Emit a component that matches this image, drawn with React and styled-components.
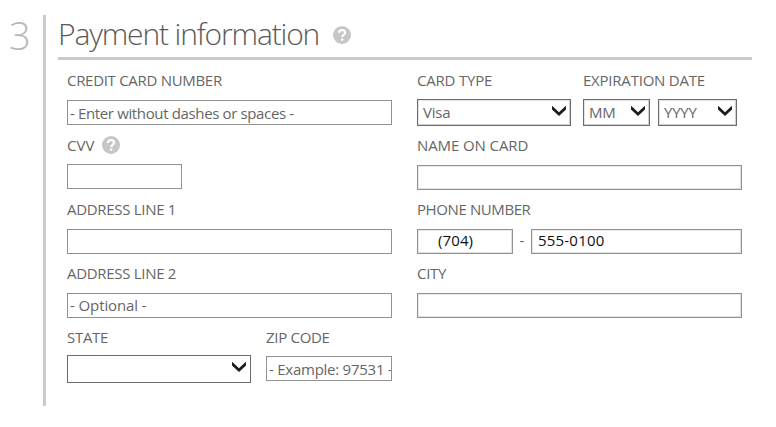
import React from "react";
import styled, { createGlobalStyle } from "styled-components";

const GlobalStyle = createGlobalStyle`
  * { box-sizing: border-box; }
  body {
    margin: 0;
    background: #fff;
    font-family: "Open Sans", "Noto Sans", sans-serif;
    color: #666;
  }
`;

const Page = styled.main`
  display: flex;
  width: 776px;
  height: 427px;
  padding: 15px 24px 21px 9px;
  overflow: hidden;
`;

const StepNumber = styled.div`
  width: 34px;
  font-size: 38px;
  font-weight: 300;
  line-height: 41px;
  color: #b8b8b8;
`;

const Section = styled.section`
  flex: 1;
  height: 391px;
  padding-left: 12px;
  border-left: 3px solid #cbcbcb;
`;

const Header = styled.header`
  display: flex;
  align-items: center;
  gap: 14px;
  height: 45px;
  padding-bottom: 5px;
  border-bottom: 3px solid #cbcbcb;
`;

const Title = styled.h1`
  margin: 0;
  font-size: 30px;
  font-weight: 300;
  line-height: 40px;
  white-space: nowrap;
  letter-spacing: -1.15px;
  color: #5a5a5a;
`;

const Columns = styled.div`
  display: grid;
  grid-template-columns: 325px 325px;
  column-gap: 25px;
  padding: 10px 0 0 9px;
`;

const Column = styled.div`
  display: grid;
  grid-template-rows: 65px 64px 64px 64px 64px;
`;

const FieldRow = styled.div`
  display: flex;
  gap: ${(p) => p.$gap || 0}px;
`;

const Field = styled.div`
  width: ${(p) => (p.$width ? `${p.$width}px` : "100%")};
`;

const LabelLine = styled.div`
  display: flex;
  align-items: center;
  gap: 8px;
  height: 20px;
  margin-bottom: ${(p) => p.$drop}px;
`;

const Label = styled.label`
  font-size: 15px;
  line-height: 20px;
  white-space: nowrap;
  letter-spacing: ${(p) => p.$spacing ?? -0.3}px;
`;

const Input = styled.div`
  width: ${(p) => (p.$width ? `${p.$width}px` : "100%")};
  height: 25px;
  padding-left: ${(p) => p.$inset ?? 2}px;
  border: 1px solid #929292;
  box-shadow: ${(p) => (p.$soft ? "inset -1px -1px #e0e0e0, inset 1px 1px #e8e8e8" : "none")};
  font-size: 15px;
  line-height: ${(p) => p.$line || 25}px;
  letter-spacing: ${(p) => p.$spacing ?? -0.35}px;
  color: ${(p) => (p.$filled ? "#111" : "#666")};
  white-space: nowrap;
  overflow: hidden;
`;

const Select = styled.div`
  display: flex;
  justify-content: space-between;
  width: ${(p) => p.$width}px;
  height: ${(p) => p.$height || 27}px;
  padding: 0 4px 0 5px;
  border: 1px solid #6c6c6c;
  box-shadow: ${(p) => (p.$soft ? "inset -1px -1px #d0d0d0, inset 1px 1px #e4e4e4" : "none")};
  font-size: 15px;
  line-height: 24px;
  letter-spacing: ${(p) => p.$spacing ?? -0.2}px;
`;

const Arrow = styled.svg`
  width: 14px;
  height: 11px;
  margin-top: 6px;
`;

const Dash = styled.span`
  width: 18px;
  text-align: center;
  font-size: 15px;
  line-height: 23px;
`;

const HelpIcon = styled.svg`
  display: block;
  width: 18px;
  height: 18px;
  margin-top: ${(p) => p.$drop || 0}px;
`;

function Help({ drop }) {
  return (
    <HelpIcon viewBox="0 0 18 18" $drop={drop} aria-label="Help">
      <circle cx="9" cy="9" r="9" fill="#c6c6c6" />
      <path d="M5.900 6.900C6 4.900 7.300 4 9 4c1.900 0 3.100 1 3.100 2.600 0 2.200-2.900 2.200-2.900 4.400" fill="none" stroke="#fff" strokeWidth="2.200" />
      <circle cx="9.200" cy="13.600" r="1.350" fill="#fff" />
    </HelpIcon>
  );
}

function Chevron() {
  return (
    <Arrow viewBox="0 0 14 11" aria-hidden="true">
      <path d="M.4 0 7 6.200 13.600 0 14 .4V3.600L7 10 0 3.600V.4Z" fill="#1c1c1c" />
    </Arrow>
  );
}

function Group({ label, spacing, drop = 10, width, help, children }) {
  return (
    <Field $width={width}>
      <LabelLine $drop={drop}>
        <Label $spacing={spacing}>{label}</Label>
        {help && <Help />}
      </LabelLine>
      {children}
    </Field>
  );
}

export default function App() {
  return (
    <>
      <GlobalStyle />
      <Page>
        <StepNumber>3</StepNumber>
        <Section>
          <Header>
            <Title>Payment information</Title>
            <Help drop={3} />
          </Header>
          <Columns>
            <Column>
              <Group label="CREDIT CARD NUMBER">
                <Input $spacing={-0.36}>- Enter without dashes or spaces -</Input>
              </Group>
              <Group label="CVV" drop={9} spacing={0} help>
                <Input $width={115} />
              </Group>
              <Group label="ADDRESS LINE 1">
                <Input />
              </Group>
              <Group label="ADDRESS LINE 2">
                <Input $line={23} $spacing={-0.1}>- Optional -</Input>
              </Group>
              <FieldRow $gap={15}>
                <Group label="STATE" width={184} drop={8}>
                  <Select $width={184} $height={28}><span /><Chevron /></Select>
                </Group>
                <Group label="ZIP CODE" width={126} drop={9}>
                  <Input $spacing={-0.25}>- Example: 97531 -</Input>
                </Group>
              </FieldRow>
            </Column>
            <Column>
              <FieldRow $gap={12}>
                <Group label="CARD TYPE" width={154} drop={9} spacing={-0.2}>
                  <Select $width={154} $soft>Visa<Chevron /></Select>
                </Group>
                <Group label="EXPIRATION DATE" width={154} drop={9} spacing={-0.22}>
                  <FieldRow $gap={8}>
                    <Select $width={67} $soft>MM<Chevron /></Select>
                    <Select $width={79} $soft>YYYY<Chevron /></Select>
                  </FieldRow>
                </Group>
              </FieldRow>
              <Group label="NAME ON CARD" spacing={-0.1}>
                <Input $soft />
              </Group>
              <Group label="PHONE NUMBER" spacing={-0.4}>
                <FieldRow>
                  <Input $width={96} $inset={20} $line={21} $spacing={0.1} $filled $soft>(704)</Input>
                  <Dash>-</Dash>
                  <Input $width={211} $inset={6} $line={21} $spacing={0.2} $filled $soft>555-0100</Input>
                </FieldRow>
              </Group>
              <Group label="CITY">
                <Input $soft />
              </Group>
            </Column>
          </Columns>
        </Section>
      </Page>
    </>
  );
}
